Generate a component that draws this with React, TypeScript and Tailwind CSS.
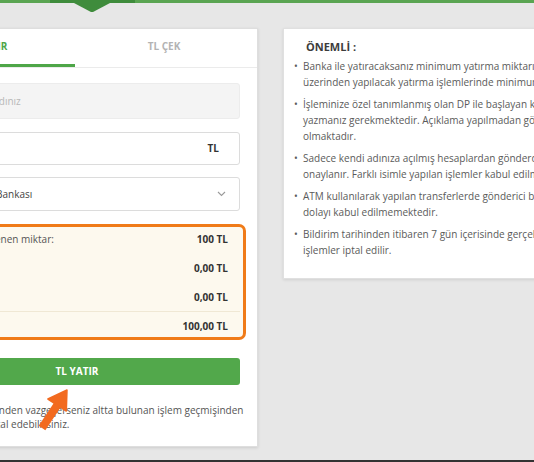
import React from "react";

const rows = [
  { label: "Yatırılmak istenen miktar:", value: "100 TL" },
  { label: "Komisyon:", value: "0,00 TL" },
  { label: "Bonus:", value: "0,00 TL" },
];

const notes: string[][] = [
  [
    "Banka ile yatıracaksanız minimum yatırma miktarı 100 TL'dir. 100 TL altında banka",
    "üzerinden yapılacak yatırma işlemlerinde minimum tutar 100 TL'dir.",
  ],
  [
    "İşleminize özel tanımlanmış olan DP ile başlayan kodu açıklama kısmına",
    "yazmanız gerekmektedir. Açıklama yapılmadan gönderilen yatırımların onayı mümkün",
    "olmaktadır.",
  ],
  [
    "Sadece kendi adınıza açılmış hesaplardan gönderdiğiniz yatırımlar",
    "onaylanır. Farklı isimle yapılan işlemler kabul edilmemektedir.",
  ],
  [
    "ATM kullanılarak yapılan transferlerde gönderici bilgisi görünmediğinden",
    "dolayı kabul edilmemektedir.",
  ],
  [
    "Bildirim tarihinden itibaren 7 gün içerisinde gerçekleşmeyen",
    "işlemler iptal edilir.",
  ],
];

export default function App() {
  return (
    <div className="relative w-[534px] h-[462px] overflow-hidden bg-[#e7e7e7] font-['Open_Sans',sans-serif] flex flex-col">
      {/* top bar */}
      <div className="relative h-[3px] bg-[#5aa552] flex shrink-0">
        <div className="ml-[50px] w-[85px] h-full bg-[#3f8c3c]" />
        <svg className="absolute left-[74px] top-[3px]" width="36" height="10" viewBox="0 0 36 10">
          <path d="M0 0 L36 0 L20 8.5 Q18 9.5 16 8.5 Z" fill="#3f8c3c" />
        </svg>
      </div>

      {/* main */}
      <div className="flex-1 flex items-start pt-[25px] ml-[-104px]">
        {/* left card */}
        <div className="w-[362px] h-[419px] shrink-0 bg-white border border-[#dedede] shadow-[0_1px_3px_rgba(0,0,0,0.12)] flex flex-col">
          <div className="h-[39px] flex border-b border-[#ebebeb]">
            <div className="flex-1 border-b-[3px] border-[#4ea648] flex items-center justify-center text-[10px] font-bold text-[#4ea648]">
              TL YATIR
            </div>
            <div className="flex-1 flex items-center justify-center pb-[3px] pr-[4px] text-[10px] font-bold text-[#b3b3b3]">
              TL ÇEK
            </div>
          </div>

          <div className="px-[17px] pt-[15px] flex flex-col text-[10px]">
            <div className="h-[36px] bg-[#f4f4f4] border border-[#ececec] rounded-[3px] flex items-center pl-[16px] text-[#b8b8b8]">
              Hesap sahibi adınız
            </div>
            <div className="mt-[13px] h-[33px] bg-white border border-[#dcdcdc] rounded-[3px] flex items-center justify-end pr-[20px] font-bold text-[#333]">
              TL
            </div>
            <div className="mt-[12px] h-[34px] bg-white border border-[#dcdcdc] rounded-[3px] flex items-center justify-between pl-[21px] pr-[13px] text-[#444]">
              <span>Türkiye Halk Bankası</span>
              <svg width="9" height="6" viewBox="0 0 9 6">
                <path d="M1 1 L4.5 4.5 L8 1" fill="none" stroke="#9a9a9a" strokeWidth="1.1" />
              </svg>
            </div>

            <div className="mt-[13px] -mx-[6px] border-[3px] border-[#f07b18] rounded-[7px] bg-[#fdf9ee] flex flex-col">
              <div className="pt-[6px] flex flex-col gap-[17px]">
                {rows.map((r) => (
                  <div key={r.value + r.label} className="flex justify-between pl-[24px] pr-[15px] leading-[12px]">
                    <span className="text-[#555]">{r.label}</span>
                    <span className="font-bold text-[#333]">{r.value}</span>
                  </div>
                ))}
              </div>
              <div className="mt-[8px] mr-[3px] border-t border-[#f0e8d4]" />
              <div className="pt-[8px] pb-[5px] flex justify-between pl-[24px] pr-[15px] leading-[12px]">
                <span className="text-[#555]">Toplam:</span>
                <span className="font-bold text-[#333]">100,00 TL</span>
              </div>
            </div>

            <div className="mt-[18px] h-[27px] bg-[#52a84b] rounded-[3px] flex items-center justify-center text-white font-bold">
              TL YATIR
            </div>

            <div className="mt-[18px] flex flex-col leading-[14px] text-[#555] whitespace-nowrap">
              <span>Para yatırım talebinden vazgeçerseniz altta bulunan işlem geçmişinden</span>
              <span>ilgili yatırımınızı iptal edebilirsiniz.</span>
            </div>
          </div>
        </div>

        {/* right card */}
        <div className="ml-[25px] w-[420px] h-[251px] shrink-0 bg-white border border-[#e0e0e0] shadow-[0_1px_3px_rgba(0,0,0,0.1)] pt-[10px] pl-[10px]">
          <div className="ml-[12px] text-[11px] leading-[16px] font-bold text-[#3c3c3c]">ÖNEMLİ :</div>
          <div className="mt-[3px] flex flex-col gap-[6px] text-[10px] leading-[16px] text-[#5a5a5a]">
            {notes.map((lines, i) => (
              <div key={i} className="flex">
                <span className="w-[9px] shrink-0">•</span>
                <div className="flex flex-col whitespace-nowrap">
                  {lines.map((l) => (
                    <span key={l}>{l}</span>
                  ))}
                </div>
              </div>
            ))}
          </div>
        </div>
      </div>

      <div className="h-[2px] bg-[#333] shrink-0" />

      {/* annotation arrow */}
      <svg className="absolute left-[30px] top-[380px] pointer-events-none" width="50" height="55" viewBox="0 0 50 55">
        <line x1="12" y1="48" x2="28" y2="24" stroke="#f26a1f" strokeWidth="8" />
        <polygon points="37,10 36.3,31 17.9,19" fill="#f26a1f" strokeLinejoin="round" stroke="#f26a1f" strokeWidth="1.5" />
      </svg>
    </div>
  );
}
